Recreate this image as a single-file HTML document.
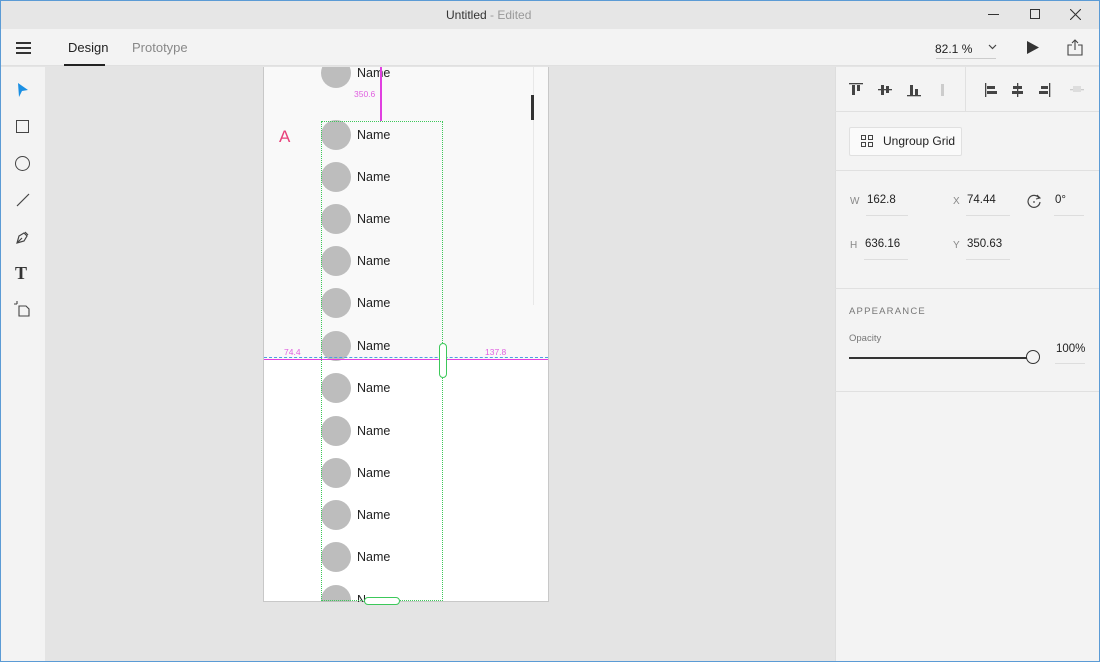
<!DOCTYPE html>
<html><head><meta charset="utf-8"><style>
*{margin:0;padding:0;box-sizing:border-box}
body{width:1100px;height:662px;overflow:hidden;font-family:"Liberation Sans",sans-serif;background:#e4e4e4;position:relative}
.a{position:absolute}
.row{position:absolute;left:321px;width:30px;height:30px;border-radius:50%;background:#bdbdbd}
.nm{position:absolute;left:357px;font-size:12.5px;color:#222}
.lbl{color:#888;font-size:10px}
.val{font-size:11.5px;color:#222}
.ul{position:absolute;height:1px;background:#ddd}
</style></head><body>
<div class="a" style="left:0;top:0;width:1100px;height:662px;border:1px solid #5b9bd5;z-index:50;pointer-events:none"></div>
<div class="a" style="left:0;top:0;width:1100px;height:29px;background:#e6e6e6"></div>
<div class="a" style="left:446px;top:8px;font-size:12px;color:#333">Untitled <span style="color:#999">- Edited</span></div>
<div class="a" style="left:988px;top:14px;width:11px;height:1px;background:#333"></div>
<div class="a" style="left:1030px;top:9px;width:10px;height:10px;border:1px solid #333"></div>
<svg class="a" style="left:1070px;top:9px" width="11" height="11"><path d="M0 0L11 11M11 0L0 11" stroke="#333" stroke-width="1.1"/></svg>
<div class="a" style="left:0;top:29px;width:1100px;height:37px;background:#f3f3f3;border-bottom:1px solid #e0e0e0"></div>
<div class="a" style="left:16px;top:42px;width:15px;height:2px;background:#333;box-shadow:0 5px 0 #333,0 10px 0 #333"></div>
<div class="a" style="left:68px;top:40px;font-size:13px;color:#222">Design</div>
<div class="a" style="left:64px;top:64px;width:41px;height:2px;background:#222"></div>
<div class="a" style="left:132px;top:40px;font-size:13px;color:#888">Prototype</div>
<div class="a" style="left:935px;top:42px;font-size:12px;color:#222">82.1 %</div>
<div class="a" style="left:936px;top:58px;width:60px;height:1px;background:#ccc"></div>
<svg class="a" style="left:988px;top:44px" width="9" height="6"><path d="M1 1L4.5 4.5L8 1" stroke="#444" fill="none" stroke-width="1.2"/></svg>
<svg class="a" style="left:1027px;top:41px" width="12" height="13"><path d="M0 0L12 6.5L0 13Z" fill="#333"/></svg>
<svg class="a" style="left:1067px;top:39px" width="16" height="17"><path d="M5 6H1V16H15V6H11M8 11V1M5 4L8 1L11 4" stroke="#444" fill="none" stroke-width="1.1"/></svg>
<div class="a" style="left:0;top:67px;width:45px;height:595px;background:#f3f3f3"></div>
<svg class="a" style="left:17px;top:82px" width="12" height="16"><path d="M1 1L11 8L5 9L2 15Z" fill="#1a8fe3"/></svg>
<div class="a" style="left:16px;top:120px;width:13px;height:13px;border:1.3px solid #444"></div>
<div class="a" style="left:15px;top:156px;width:15px;height:15px;border:1.3px solid #444;border-radius:50%"></div>
<svg class="a" style="left:16px;top:193px" width="14" height="14"><path d="M1 13L13 1" stroke="#444" stroke-width="1.2"/></svg>
<svg class="a" style="left:15px;top:229px" width="16" height="16"><path d="M2 14L4 7L9 4L12 7L9 12Z M2 14L7 9 M10 3L13 6" stroke="#444" fill="none" stroke-width="1.2"/></svg>
<div class="a" style="left:15px;top:263px;font-family:'Liberation Serif',serif;font-size:18px;font-weight:bold;color:#333">T</div>
<svg class="a" style="left:14px;top:301px" width="16" height="16"><path d="M5 5H12L15 8V15H5Z M0 3H3 M3 0V3" stroke="#444" fill="none" stroke-width="1.1"/></svg>
<div class="a" style="left:835px;top:67px;width:265px;height:595px;background:#f3f3f3;border-left:1px solid #ddd"></div>
<div class="a" style="left:835px;top:111px;width:265px;height:1px;background:#e0e0e0"></div>
<div class="a" style="left:965px;top:67px;width:1px;height:44px;background:#e0e0e0"></div>
<svg class="a" style="left:848px;top:82px" width="240" height="16" fill="#444">
<rect x="1" y="1" width="14" height="1.3"/><rect x="4" y="3" width="3" height="10"/><rect x="9" y="3" width="3" height="6"/>
<rect x="30" y="7" width="14" height="1.3"/><rect x="33" y="3" width="3" height="10"/><rect x="38" y="4" width="3" height="7"/>
<rect x="59" y="13" width="14" height="1.3"/><rect x="62" y="3" width="3" height="10"/><rect x="67" y="7" width="3" height="6"/>
<rect x="93" y="2" width="3" height="12" fill="#ccc"/>
<rect x="137" y="1" width="1.3" height="14"/><rect x="139" y="4" width="8" height="3"/><rect x="139" y="9" width="10" height="3"/>
<rect x="169" y="1" width="1.3" height="14"/><rect x="165" y="4" width="9" height="3"/><rect x="164" y="9" width="11" height="3"/>
<rect x="201" y="1" width="1.3" height="14"/><rect x="193" y="4" width="7" height="3"/><rect x="191" y="9" width="9" height="3"/>
<rect x="222" y="7" width="14" height="1.3" fill="#ccc"/><rect x="225" y="4" width="8" height="6" fill="#ddd"/>
</svg>
<div class="a" style="left:849px;top:127px;width:113px;height:29px;background:#fafafa;border:1px solid #e0e0e0;border-radius:2px"></div>
<svg class="a" style="left:861px;top:135px" width="12" height="12"><g fill="none" stroke="#444"><rect x="0.5" y="0.5" width="4" height="4"/><rect x="7.5" y="0.5" width="4" height="4"/><rect x="0.5" y="7.5" width="4" height="4"/><rect x="7.5" y="7.5" width="4" height="4"/></g></svg>
<div class="a" style="left:883px;top:134px;font-size:12px;color:#222">Ungroup Grid</div>
<div class="a" style="left:835px;top:170px;width:265px;height:1px;background:#e0e0e0"></div>
<div class="a lbl" style="left:850px;top:196px">W</div><div class="a val" style="left:867px;top:194px">162.8</div><div class="ul" style="left:866px;top:215px;width:42px"></div>
<div class="a lbl" style="left:953px;top:196px">X</div><div class="a val" style="left:967px;top:194px">74.44</div><div class="ul" style="left:966px;top:215px;width:44px"></div>
<svg class="a" style="left:1027px;top:194px" width="15" height="15"><path d="M12 4A6 6 0 1 0 13 8" fill="none" stroke="#444" stroke-width="1.2"/><path d="M10 1L13 4L9 5" fill="none" stroke="#444" stroke-width="1.1"/><circle cx="7" cy="8" r="0.9" fill="#444"/></svg>
<div class="a val" style="left:1055px;top:194px">0°</div><div class="ul" style="left:1054px;top:215px;width:30px"></div>
<div class="a lbl" style="left:850px;top:240px">H</div><div class="a val" style="left:865px;top:238px">636.16</div><div class="ul" style="left:864px;top:259px;width:44px"></div>
<div class="a lbl" style="left:953px;top:240px">Y</div><div class="a val" style="left:967px;top:238px">350.63</div><div class="ul" style="left:966px;top:259px;width:44px"></div>
<div class="a" style="left:835px;top:288px;width:265px;height:1px;background:#e0e0e0"></div>
<div class="a" style="left:849px;top:306px;font-size:9.5px;letter-spacing:1.2px;color:#777">APPEARANCE</div>
<div class="a" style="left:849px;top:333px;font-size:9.5px;color:#777">Opacity</div>
<div class="a" style="left:849px;top:357px;width:178px;height:1.5px;background:#333"></div>
<div class="a" style="left:1026px;top:350px;width:14px;height:14px;border:1.5px solid #333;border-radius:50%;background:#f3f3f3"></div>
<div class="a val" style="left:1056px;top:343px">100%</div><div class="ul" style="left:1055px;top:363px;width:30px"></div>
<div class="a" style="left:835px;top:391px;width:265px;height:1px;background:#e0e0e0"></div>
<div class="a" style="left:263px;top:67px;width:286px;height:535px;background:#fff;border:1px solid #c8c8c8;border-top:none;overflow:hidden">
  <div class="a" style="left:0;top:0;width:286px;height:292px;background:#f9f9f9"></div>
  <div class="a" style="left:269px;top:0;width:1px;height:238px;background:#e8e8e8"></div>
  <div class="a" style="left:267px;top:28px;width:3px;height:25px;background:#333"></div>
</div>
<div class="a" style="left:279px;top:127px;font-size:17px;color:#e8407a">A</div>
<div class="a" style="left:0;top:67px;width:1100px;height:535px;overflow:hidden">
<div style="position:absolute;left:0;top:-67px">
<div class="row" style="top:58px"></div><div class="nm" style="top:66px">Name</div>
<div class="row" style="top:120px"></div><div class="nm" style="top:128px">Name</div>
<div class="row" style="top:162px"></div><div class="nm" style="top:170px">Name</div>
<div class="row" style="top:204px"></div><div class="nm" style="top:212px">Name</div>
<div class="row" style="top:246px"></div><div class="nm" style="top:254px">Name</div>
<div class="row" style="top:288px"></div><div class="nm" style="top:296px">Name</div>
<div class="row" style="top:331px"></div><div class="nm" style="top:339px">Name</div>
<div class="row" style="top:373px"></div><div class="nm" style="top:381px">Name</div>
<div class="row" style="top:416px"></div><div class="nm" style="top:424px">Name</div>
<div class="row" style="top:458px"></div><div class="nm" style="top:466px">Name</div>
<div class="row" style="top:500px"></div><div class="nm" style="top:508px">Name</div>
<div class="row" style="top:542px"></div><div class="nm" style="top:550px">Name</div>
<div class="row" style="top:585px"></div><div class="nm" style="top:593px">Name</div>
</div></div>
<div class="a" style="left:380px;top:67px;width:1.5px;height:54px;background:#e040e0"></div>
<div class="a" style="left:354px;top:89px;font-size:8.5px;color:#e060e0">350.6</div>
<div class="a" style="left:321px;top:121px;width:122px;height:480px;border:1px dotted #3cc85a"></div>
<div class="a" style="left:264px;top:358.5px;width:284px;height:1.5px;background:#e040e0"></div>
<div class="a" style="left:264px;top:357px;width:284px;height:0;border-top:1.5px dashed #4aa0e0"></div>
<div class="a" style="left:284px;top:347px;font-size:8.5px;color:#e060e0">74.4</div>
<div class="a" style="left:485px;top:347px;font-size:8.5px;color:#e060e0">137.8</div>
<div class="a" style="left:439px;top:343px;width:8px;height:35px;border:1.3px solid #3cc85a;border-radius:4px;background:#fff"></div>
<div class="a" style="left:364px;top:597px;width:36px;height:8px;border:1.3px solid #3cc85a;border-radius:4px;background:#fff"></div>
</body></html>
